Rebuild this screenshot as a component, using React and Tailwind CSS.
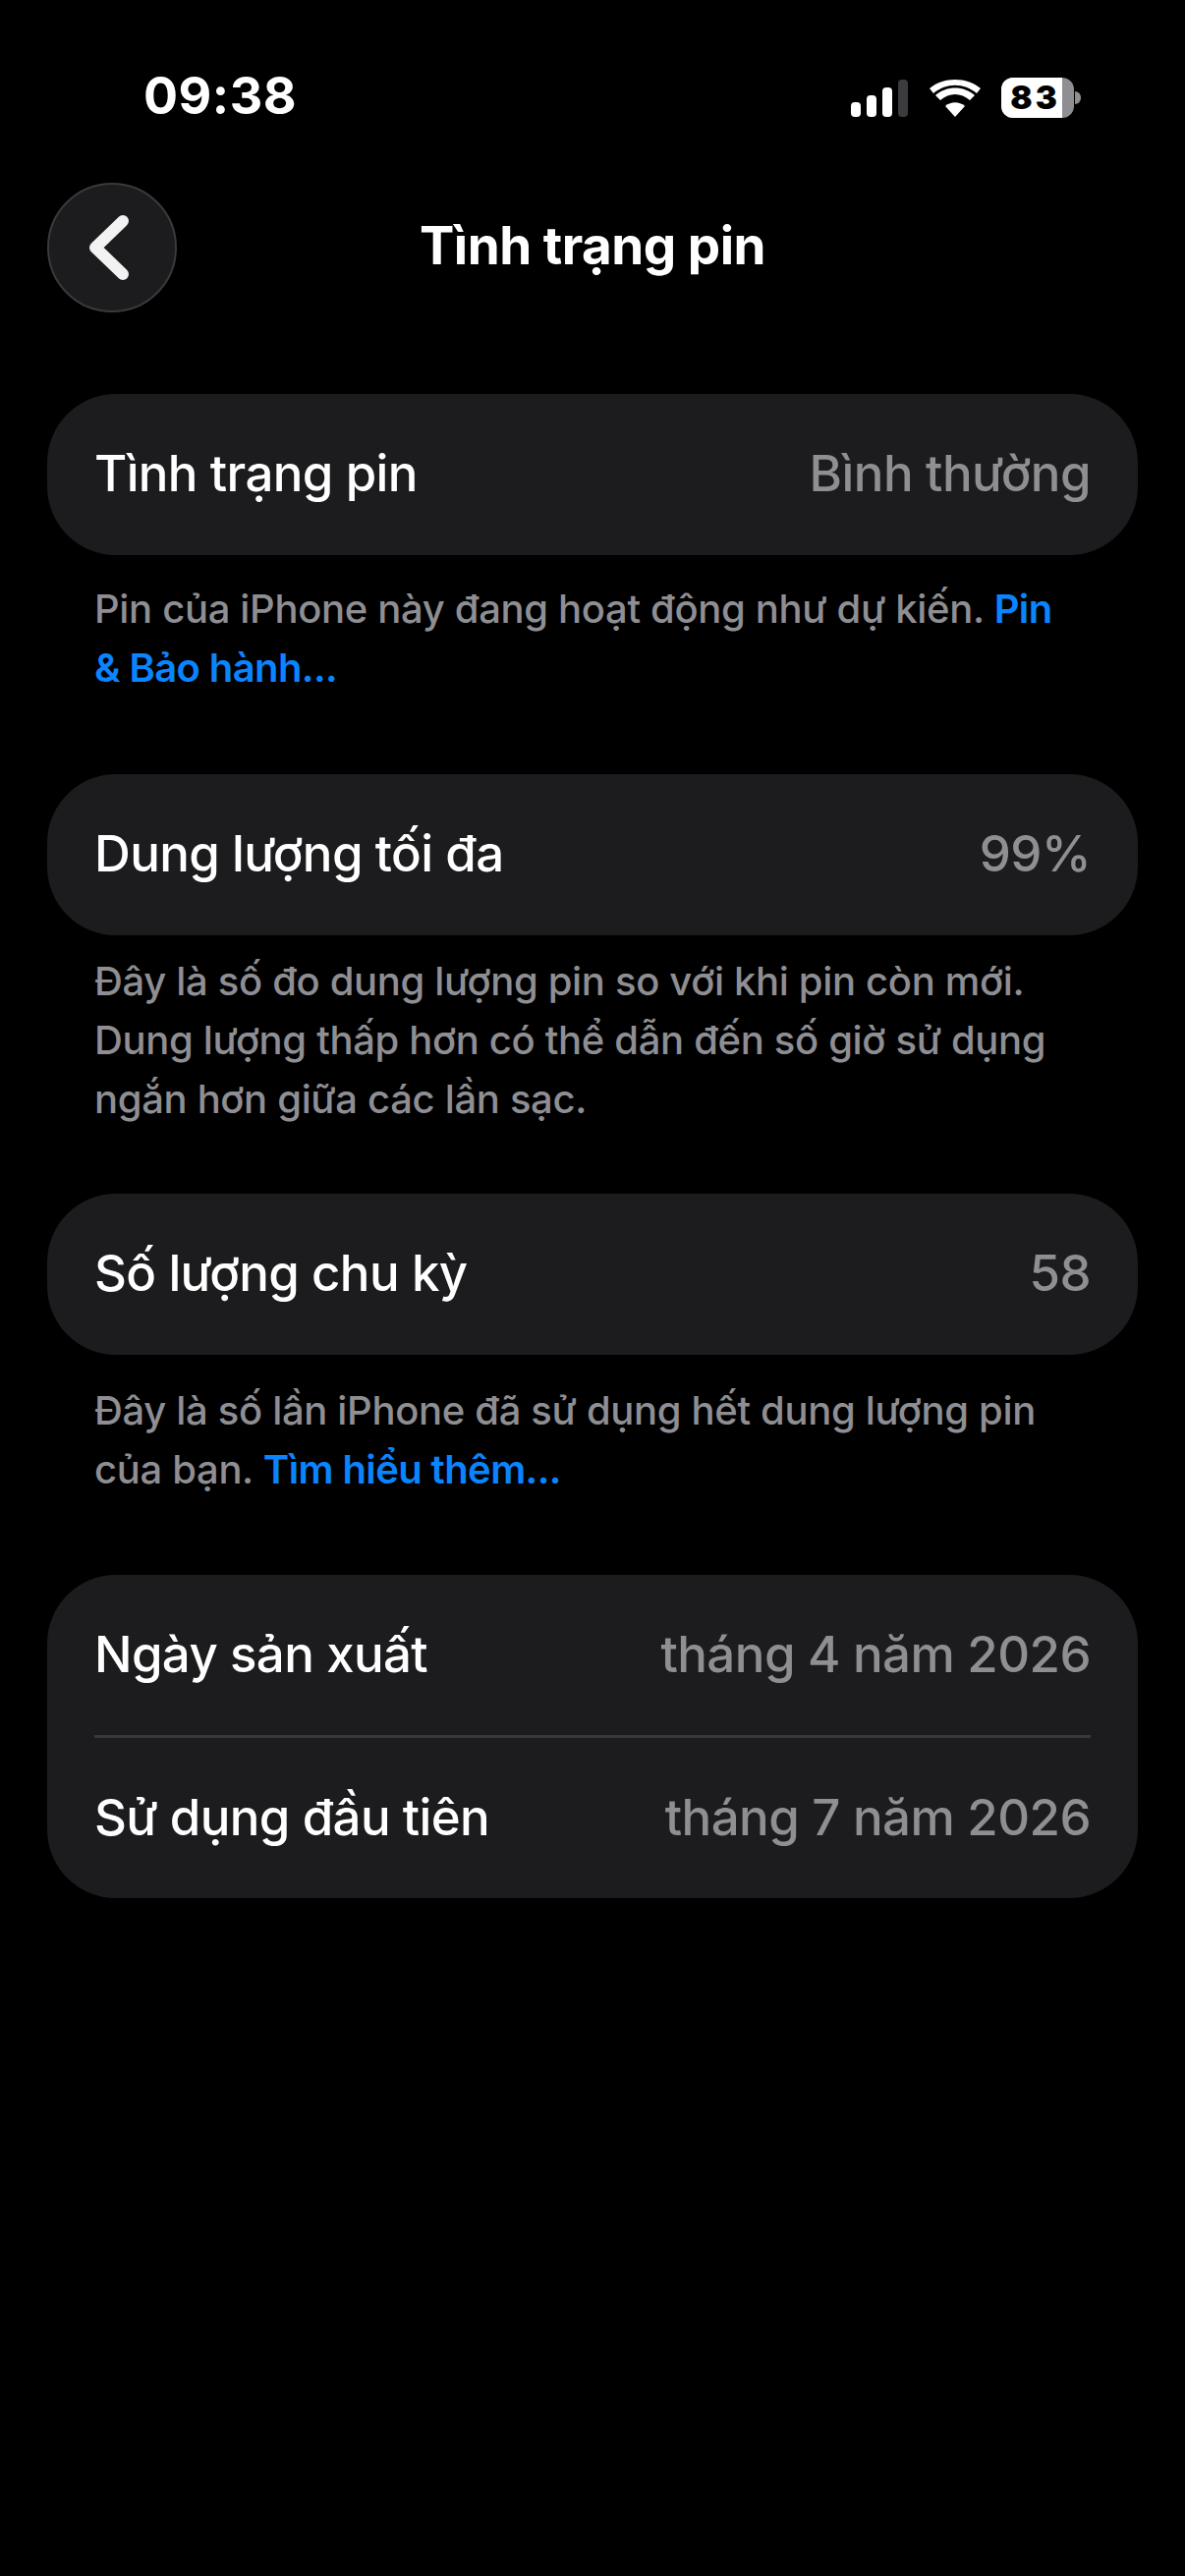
const font = { fontFamily: "Inter, 'Noto Sans', sans-serif" };

function Row({ label, value, tall = false }) {
  return (
    <div className={`flex items-center justify-between pb-[3px] pl-[48px] pr-[48px] ${tall ? "h-[164px]" : "h-[163px]"}`}>
      <span className="text-[51px] font-medium leading-none tracking-[-0.65px] text-white">{label}</span>
      <span className="text-[51px] font-medium leading-none tracking-[-0.55px] text-[#8e8e93]">{value}</span>
    </div>
  );
}

function Card({ children }) {
  return <div className="overflow-hidden rounded-[70px] bg-[#1c1c1e]">{children}</div>;
}

function Note({ children, className = "" }) {
  return <p className={`px-[48px] text-[40px] font-medium leading-[60px] tracking-[-0.33px] text-[#8e8e93] ${className}`}>{children}</p>;
}

function Link({ children }) {
  return <span className="font-semibold tracking-[-0.6px] text-[#0a84ff]">{children}</span>;
}

function StatusIcons() {
  return (
    <div className="flex items-center">
      <svg width="60" height="38" viewBox="0 0 60 38" className="mr-[20px]">
        <rect x="0" y="23" width="10" height="15" rx="4" fill="#fff" />
        <rect x="16" y="16" width="10" height="22" rx="4" fill="#fff" />
        <rect x="32" y="8" width="10" height="30" rx="4" fill="#fff" />
        <rect x="48" y="0" width="10" height="38" rx="4" fill="#3c3c3e" />
      </svg>
      <svg width="52" height="38" viewBox="0 0 52 38" className="mr-[21px]">
        <path d="M26 38 L16 27 C22 22 30 22 36 27 Z" fill="#fff" />
        <path d="M11 21 L6 16 C17 6 35 6 46 16 L41 21 C32 13 20 13 11 21 Z" fill="#fff" />
        <path d="M4 14 L0 9 C14 -3 38 -3 52 9 L48 14 C35 3 17 3 4 14 Z" fill="#fff" />
      </svg>
      <div className="flex items-center">
        <div className="flex h-[41px] w-[74px] items-center overflow-hidden rounded-[12px] bg-[#8e8e93]">
          <div className="flex h-full w-[62px] items-center justify-center bg-white pl-[7px] text-[33px] font-black leading-none tracking-[3px] text-black">83</div>
        </div>
        <div className="ml-[1px] h-[13px] w-[6px] rounded-r-[6px] bg-[#8e8e93]" />
      </div>
    </div>
  );
}

export default function App() {
  return (
    <div className="h-[2622px] w-[1206px] overflow-hidden bg-black" style={font}>
      <div className="flex h-[186px] items-start justify-between pl-[146px] pr-[106px] pt-[71px]">
        <span className="text-[52px] font-bold leading-[54px] tracking-[0.5px] text-white">09:38</span>
        <div className="pt-[8px]"><StatusIcons /></div>
      </div>
      <div className="relative flex h-[132px] items-center justify-center pb-[3px]">
        <button className="absolute left-[48px] top-0 flex h-[132px] w-[132px] items-center justify-center rounded-full border-2 border-[#3a3a3c] bg-[#1c1c1e]">
          <svg width="44" height="66" viewBox="0 0 44 66" className="mr-[6px]">
            <path d="M36 6 L8 33 L36 60" fill="none" stroke="#f2f2f2" strokeWidth="12" strokeLinecap="round" strokeLinejoin="round" />
          </svg>
        </button>
        <h1 className="text-[53px] font-bold leading-none tracking-[-0.5px] text-white">Tình trạng pin</h1>
      </div>
      <div className="px-[48px] pt-[83px]">
        <Card><Row tall label="Tình trạng pin" value="Bình thường" /></Card>
        <Note className="mb-[78px] mt-[25px]">
          Pin của iPhone này đang hoạt động như dự kiến. <Link>Pin<br />&amp; Bảo hành...</Link>
        </Note>
        <Card><Row tall label="Dung lượng tối đa" value="99%" /></Card>
        <Note className="mb-[66px] mt-[17px]">
          Đây là số đo dung lượng pin so với khi pin còn mới.<br />Dung lượng thấp hơn có thể dẫn đến số giờ sử dụng<br />ngắn hơn giữa các lần sạc.
        </Note>
        <Card><Row tall label="Số lượng chu kỳ" value="58" /></Card>
        <Note className="mb-[77px] mt-[27px]">
          Đây là số lần iPhone đã sử dụng hết dung lượng pin<br />của bạn. <Link>Tìm hiểu thêm...</Link>
        </Note>
        <Card>
          <Row label="Ngày sản xuất" value="tháng 4 năm 2026" />
          <div className="mx-[48px] h-[3px] bg-[#38383a]" />
          <Row label="Sử dụng đầu tiên" value="tháng 7 năm 2026" />
        </Card>
      </div>
    </div>
  );
}
